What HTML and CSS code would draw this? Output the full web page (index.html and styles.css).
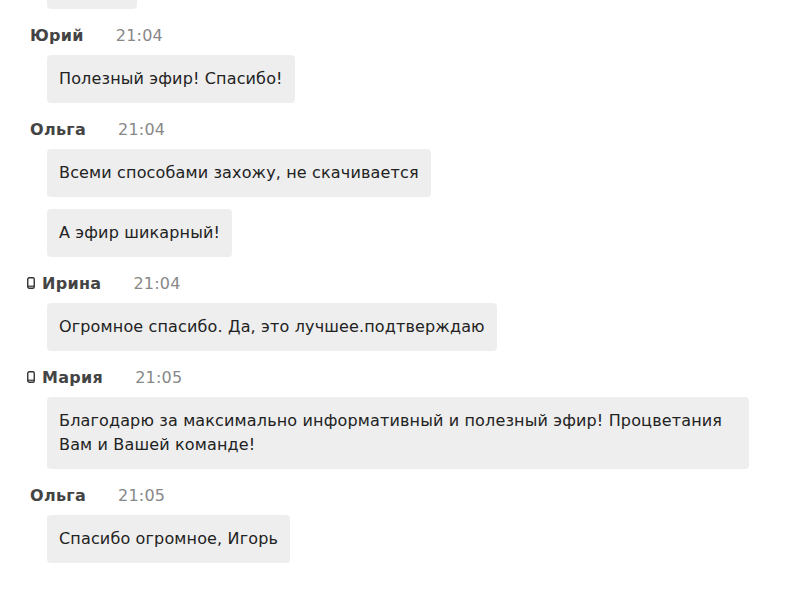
FILE: index.html
```html
<!DOCTYPE html>
<html>
<head>
	<meta charset="utf-8">
	<link rel="stylesheet" href="styles.css">
</head>
<body>

	<div id='chat'>

		<div class='bubble prev'></div>

		<div class='author'><span class='name'>Юрий</span><span class='time'>21:04</span></div>
		<div class='bubble'>Полезный эфир! Спасибо!</div>

		<div class='author'><span class='name'>Ольга</span><span class='time'>21:04</span></div>
		<div class='bubble'>Всеми способами захожу, не скачивается</div>
		<div class='bubble'>А эфир шикарный!</div>

		<div class='author mobile'><svg class='device' width='8' height='12' viewBox='0 0 8 12'><rect x='0.75' y='0.75' width='6.5' height='10.5' rx='1.5' fill='none' stroke='#333' stroke-width='1.4'/><line x1='1' y1='9.2' x2='7' y2='9.2' stroke='#333' stroke-width='1.2'/></svg><span class='name'>Ирина</span><span class='time'>21:04</span></div>
		<div class='bubble'>Огромное спасибо. Да, это лучшее.подтверждаю</div>

		<div class='author mobile'><svg class='device' width='8' height='12' viewBox='0 0 8 12'><rect x='0.75' y='0.75' width='6.5' height='10.5' rx='1.5' fill='none' stroke='#333' stroke-width='1.4'/><line x1='1' y1='9.2' x2='7' y2='9.2' stroke='#333' stroke-width='1.2'/></svg><span class='name'>Мария</span><span class='time'>21:05</span></div>
		<div class='bubble long'>Благодарю за максимально информативный и полезный эфир! Процветания<br>Вам и Вашей команде!</div>

		<div class='author'><span class='name'>Ольга</span><span class='time'>21:05</span></div>
		<div class='bubble'>Спасибо огромное, Игорь</div>

	</div>

</body>
</html>
```

FILE: styles.css
```css
body
{
	background-color: white;
	margin: 0;
	padding: 0;
	font-family: "DejaVu Sans", Verdana, sans-serif;
	color: #222;
	overflow: hidden;
}


/*
	Chat list
*/
#chat
{
	display: flex;
	flex-direction: column;
	align-items: flex-start;
	padding-left: 30px;
	margin-top: -39px;
}


/*
	Author line
*/
.author
{
	display: flex;
	align-items: center;
	height: 20px;
	margin-top: 4px;
	margin-bottom: 10px;
	font-size: 16px;
}
.author.mobile
{
	margin-left: -3px;
}
.device
{
	margin-right: 7px;
}
.name
{
	font-weight: bold;
	color: #444;
	letter-spacing: 0.3px;
}
.time
{
	color: #888;
	margin-left: 32px;
	letter-spacing: 0.2px;
}


/*
	Message bubble
*/
.bubble
{
	margin-left: 17px;
	margin-bottom: 12px;
	padding: 12px;
	background-color: #eeeeee;
	border-radius: 4px;
	font-size: 16px;
	line-height: 24px;
	letter-spacing: 0.15px;
}
.bubble.prev
{
	width: 66px;
	height: 24px;
}
.bubble.long
{
	width: 678px;
}
```
